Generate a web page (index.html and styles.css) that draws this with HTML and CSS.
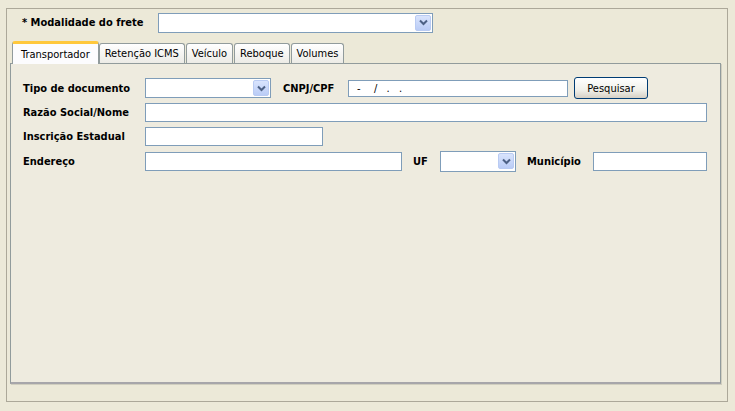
FILE: index.html
```html
<!DOCTYPE html>
<html lang="pt">
<head>
<meta charset="utf-8">
<title>Frete</title>
<link rel="stylesheet" href="styles.css">
</head>
<body>
<div class="frame">
  <div class="top-row">
    <span class="label top-label">* Modalidade do frete</span>
    <div class="select sel-mod">
      <span class="sel-btn"><svg width="9" height="7" viewBox="0 0 9 7"><path d="M1 1.5 L4.5 5 L8 1.5" fill="none" stroke="#4D6185" stroke-width="2"/></svg></span>
    </div>
  </div>
  <div class="tabs">
    <div class="tab active">Transportador</div>
    <div class="tab">Retenção ICMS</div>
    <div class="tab">Veículo</div>
    <div class="tab">Reboque</div>
    <div class="tab">Volumes</div>
  </div>
  <div class="panel">
    <div class="row">
      <span class="label col-label">Tipo de documento</span>
      <div class="select sel-tipo">
        <span class="sel-btn"><svg width="9" height="7" viewBox="0 0 9 7"><path d="M1 1.5 L4.5 5 L8 1.5" fill="none" stroke="#4D6185" stroke-width="2"/></svg></span>
      </div>
      <span class="label cnpj-label">CNPJ/CPF</span>
      <div class="input in-cnpj"><span class="mask">-   /  .  .</span></div>
      <div class="button">Pesquisar</div>
    </div>
    <div class="row">
      <span class="label col-label">Razão Social/Nome</span>
      <div class="input in-razao"></div>
    </div>
    <div class="row">
      <span class="label col-label">Inscrição Estadual</span>
      <div class="input in-ie"></div>
    </div>
    <div class="row row-last">
      <span class="label col-label">Endereço</span>
      <div class="input in-end"></div>
      <span class="label uf-label">UF</span>
      <div class="select sel-uf">
        <span class="sel-btn"><svg width="9" height="7" viewBox="0 0 9 7"><path d="M1 1.5 L4.5 5 L8 1.5" fill="none" stroke="#4D6185" stroke-width="2"/></svg></span>
      </div>
      <span class="label mun-label">Município</span>
      <div class="input in-mun"></div>
    </div>
  </div>
</div>
</body>
</html>
```
FILE: styles.css
```css
* { box-sizing: border-box; }
html, body { margin: 0; padding: 0; }
body {
  width: 735px;
  height: 411px;
  background: #ECE9D8;
  font-family: "DejaVu Sans Condensed", "DejaVu Sans", sans-serif;
  font-stretch: condensed;
  font-size: 11px;
  color: #000;
  padding: 8px 7px 9px 6px;
  overflow: hidden;
}
.frame {
  height: 394px;
  border: 1px solid #ACA899;
  padding: 3px 6px 17px 4px;
  display: flex;
  flex-direction: column;
}
.label { font-weight: bold; white-space: nowrap; }
.top-row {
  display: flex;
  align-items: center;
  height: 21px;
  padding-left: 11px;
}
.top-label { width: 136px; }
.select {
  height: 20px;
  background: #fff;
  border: 1px solid #7F9DB9;
  display: flex;
  justify-content: flex-end;
  align-items: center;
  padding-right: 1px;
}
.sel-btn {
  width: 16px;
  height: 16px;
  border: 1px solid #B9CBF3;
  border-radius: 2px;
  background: linear-gradient(#D9E4FD, #BACCF6);
  display: flex;
  align-items: center;
  justify-content: center;
}
.sel-mod { width: 275px; }
.tabs {
  display: flex;
  align-items: flex-end;
  height: 22px;
  margin-top: 8px;
  padding-left: 1px;
}
.tab {
  height: 20px;
  padding: 0 5px;
  border: 1px solid #919B9C;
  border-bottom: none;
  border-radius: 3px 3px 0 0;
  background: linear-gradient(#FFFFFF, #ECEBE6);
  display: flex;
  align-items: center;
  margin-right: 1px;
  white-space: nowrap;
}
.tab.active {
  padding: 0 8px;
  margin-right: 0;
  border-top: 3px solid #FFC83C;
  background: #FCFCFE;
  position: relative;
  z-index: 1;
  margin-bottom: -1px;
  height: 23px;
}
.panel {
  flex: 1;
  margin-left: -1px;
  border: 1px solid #919B9C;
  border-bottom: 2px solid #A7A6AA;
  box-shadow: 1px 1px 0 #D0CEBF;
  background: #EEEBDF;
  padding: 12px 11px 0 12px;
}
.row {
  display: flex;
  align-items: center;
  height: 24px;
}
.row-last { height: 26px; }
.col-label { width: 122px; }
.input {
  height: 19px;
  background: #fff;
  border: 1px solid #7F9DB9;
}
.sel-tipo { width: 126px; }
.cnpj-label { margin-left: 12px; width: 65px; }
.in-cnpj { width: 220px; height: 17px; display: flex; align-items: center; padding-left: 8px; }
.mask { white-space: pre; font-weight: normal; letter-spacing: 1px; }
.button {
  margin-left: 6px;
  width: 74px;
  height: 22px;
  border: 1px solid #003C74;
  border-radius: 3px;
  background: linear-gradient(#FFFFFF 0%, #F0F0EA 60%, #D6D0C5 100%);
  display: flex;
  align-items: center;
  justify-content: center;
}
.in-razao { width: 562px; }
.in-ie { width: 178px; }
.in-end { width: 257px; }
.uf-label { margin-left: 11px; width: 27px; }
.sel-uf { width: 76px; height: 21px; }
.mun-label { margin-left: 11px; width: 66px; }
.in-mun { width: 114px; }
```
